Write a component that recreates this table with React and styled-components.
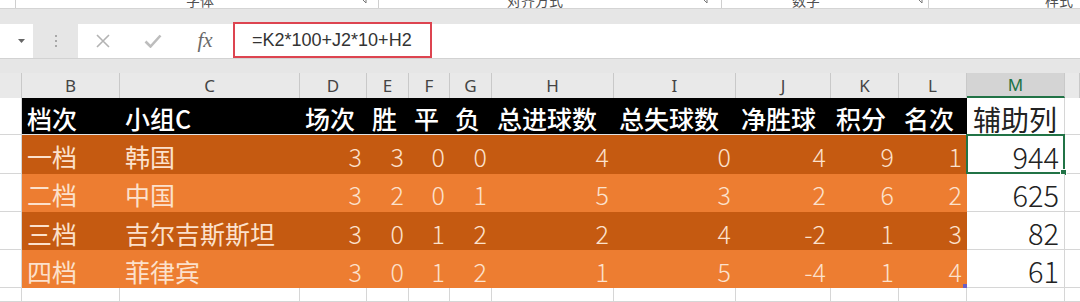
import React from 'react';
import styled, { createGlobalStyle } from 'styled-components';

const COLS = '22px 98px 180px 67px 42px 41px 42px 122px 122px 95px 68px 68px 98px 1fr';

const GlobalStyle = createGlobalStyle`
  html, body { margin: 0; padding: 0; background: #fff; }
  body {
    width: 1080px; height: 302px; overflow: hidden;
    font-family: "Noto Sans CJK SC", "Noto Sans", sans-serif;
  }
`;

const Page = styled.div`
  width: 1080px;
  height: 302px;
  display: flex;
  flex-direction: column;
  overflow: hidden;
  background: #fff;
`;

/* ---------- ribbon remnant ---------- */
const Ribbon = styled.div`
  height: 8px;
  display: flex;
  background: #fff;
  overflow: hidden;
  border-bottom: 1px solid #d4d4d4;
`;
const RibbonGroup = styled.div`
  width: ${p => p.$w}px;
  flex: ${p => (p.$grow ? 1 : 'none')};
  position: relative;
  display: flex;
  align-items: flex-start;
  padding-left: ${p => p.$label || 0}px;
  box-sizing: border-box;
  border-right: ${p => (p.$grow ? 'none' : '1px solid #cfcfcf')};
`;
const RibbonLabel = styled.span`
  font-size: 14px;
  line-height: 14px;
  margin-top: -7px;
  color: #505050;
  white-space: nowrap;
`;
const Launcher = styled.svg`
  position: absolute;
  right: ${p => p.$r}px;
  top: -4px;
`;

/* ---------- formula bar ---------- */
const Band = styled.div`
  height: ${p => p.$h}px;
  background: #e6e6e6;
  border-top: ${p => (p.$line ? '1px solid #d2d2d2' : 'none')};
`;
const FormulaRow = styled.div`
  height: 34px;
  display: flex;
  background: #e6e6e6;
`;
const NameBox = styled.div`
  width: 33px;
  background: #fff;
  display: flex;
  align-items: center;
  justify-content: flex-end;
  padding-right: 8px;
  box-sizing: border-box;
`;
const Gap = styled.div`
  width: 45px;
  display: flex;
  align-items: center;
  justify-content: center;
`;
const Dots = styled.div`
  display: flex;
  flex-direction: column;
  gap: 3px;
  & > span { width: 2px; height: 2px; background: #a8a8a8; display: block; }
`;
const FormulaBox = styled.div`
  flex: 1;
  background: #fff;
  display: flex;
  align-items: center;
`;
const IconSlot = styled.div`
  width: 50px;
  display: flex;
  align-items: center;
  justify-content: center;
`;
const Fx = styled.span`
  font-family: "Liberation Serif", "DejaVu Serif", serif;
  font-style: italic;
  font-size: 21px;
  color: #6a6a6a;
  margin-left: 4px;
`;
const RedBox = styled.div`
  margin-left: 5px;
  width: 199px;
  height: 36px;
  margin-top: -1px;
  box-sizing: border-box;
  border: 2px solid #dd4450;
  display: flex;
  align-items: center;
  padding-left: 17px;
  font-family: "Liberation Sans", Arial, sans-serif;
  font-size: 18px;
  color: #333;
`;

/* ---------- sheet ---------- */
const ColHeaderRow = styled.div`
  display: grid;
  grid-template-columns: ${COLS};
  height: 25px;
  background: #e9e9e9;
`;
const ColHead = styled.div`
  display: flex;
  align-items: center;
  justify-content: center;
  font-family: "Noto Sans", "Liberation Sans", sans-serif;
  font-size: 17px;
  line-height: 1;
  padding-top: 1px;
  box-sizing: border-box;
  color: ${p => (p.$active ? '#217346' : '#444')};
  background: ${p => (p.$active ? '#d4d4d4' : 'transparent')};
  border-right: 1px solid #c9c9c9;
  border-bottom: ${p => (p.$active ? '2px solid #217346' : 'none')};
`;

const Row = styled.div`
  display: grid;
  grid-template-columns: ${COLS};
  height: ${p => p.$h}px;
`;

const BG = { head: '#000000', dark: '#c55a11', light: '#ed7d31', none: '#ffffff' };

const RowHead = styled.div`
  background: #fff;
  border-right: 1px solid #d6d6d6;
  border-bottom: 1px solid #d6d6d6;
`;

const Cell = styled.div`
  position: relative;
  display: flex;
  align-items: center;
  justify-content: ${p => (p.$right ? 'flex-end' : 'flex-start')};
  padding: ${p => (p.$tone === 'head' ? 6 : 4)}px 5px 0 ${p => (p.$right ? 0 : 5)}px;
  box-sizing: border-box;
  background: ${p => BG[p.$tone]};
  color: ${p => (p.$tone === 'head' ? '#ffffff' : '#fce1cc')};
  font-size: 25px;
  font-weight: ${p => (p.$tone === 'head' ? 500 : p.$right ? 300 : 400)};
  line-height: 1;
  white-space: nowrap;
  border-bottom: ${p => (p.$tone === 'head' ? '1px solid #e2e2e2' : 'none')};
`;

const AuxCell = styled.div`
  position: relative;
  display: flex;
  align-items: center;
  justify-content: ${p => (p.$head ? 'flex-start' : 'flex-end')};
  padding: ${p => (p.$head ? 6 : 4)}px 5px 0 6px;
  box-sizing: border-box;
  background: #fff;
  color: #222;
  font-size: ${p => (p.$head ? 28 : 29)}px;
  font-weight: ${p => (p.$head ? 400 : 300)};
  line-height: 1;
  border-right: 1px solid #d6d6d6;
  border-bottom: 1px solid #d6d6d6;
`;

const Blank = styled.div`
  background: #fff;
  border-right: ${p => (p.$noRight ? 'none' : '1px solid #d6d6d6')};
  border-bottom: 1px solid #d6d6d6;
`;

const Selection = styled.div`
  position: absolute;
  left: -1px;
  top: -1px;
  right: -1px;
  bottom: -1px;
  border: 2px solid #217346;
  pointer-events: none;
`;
const Handle = styled.div`
  position: absolute;
  right: -4px;
  bottom: -4px;
  width: 5px;
  height: 5px;
  background: #217346;
  border: 1px solid #fff;
`;
const ResizeMark = styled.div`
  position: absolute;
  right: 0;
  bottom: 0;
  width: 4px;
  height: 4px;
  background: #6b5fc4;
`;

const header = ['档次', '小组C', '场次', '胜', '平', '负', '总进球数', '总失球数', '净胜球', '积分', '名次'];
const rows = [
  { tone: 'dark', h: 39, cells: ['一档', '韩国', 3, 3, 0, 0, 4, 0, 4, 9, 1], aux: 944, sel: true },
  { tone: 'light', h: 38, cells: ['二档', '中国', 3, 2, 0, 1, 5, 3, 2, 6, 2], aux: 625 },
  { tone: 'dark', h: 39, cells: ['三档', '吉尔吉斯斯坦', 3, 0, 1, 2, 2, 4, -2, 1, 3], aux: 82 },
  { tone: 'light', h: 38, cells: ['四档', '菲律宾', 3, 0, 1, 2, 1, 5, -4, 1, 4], aux: 61, last: true },
];
const letters = ['B', 'C', 'D', 'E', 'F', 'G', 'H', 'I', 'J', 'K', 'L', 'M', ''];

const LauncherIcon = ({ r }) => (
  <Launcher $r={r} width="9" height="9" viewBox="0 0 9 9">
    <path d="M1 1h6v6" fill="none" stroke="#777" strokeWidth="1" />
    <path d="M1 1l6 6" fill="none" stroke="#777" strokeWidth="1" />
  </Launcher>
);

export default function App() {
  return (
    <Page>
      <GlobalStyle />
      <Ribbon>
        <RibbonGroup $w={16} />
        <RibbonGroup $w={363} $label={170}>
          <RibbonLabel>字体</RibbonLabel>
          <LauncherIcon r={10} />
        </RibbonGroup>
        <RibbonGroup $w={343} $label={128}>
          <RibbonLabel>对齐方式</RibbonLabel>
          <LauncherIcon r={12} />
        </RibbonGroup>
        <RibbonGroup $w={207} $label={70}>
          <RibbonLabel>数字</RibbonLabel>
          <LauncherIcon r={4} />
        </RibbonGroup>
        <RibbonGroup $grow $label={116}>
          <RibbonLabel>样式</RibbonLabel>
        </RibbonGroup>
      </Ribbon>
      <Band $h={15} />
      <FormulaRow>
        <NameBox>
          <svg width="7" height="4" viewBox="0 0 7 4"><path d="M0 0h7L3.5 4z" fill="#666" /></svg>
        </NameBox>
        <Gap>
          <Dots><span /><span /><span /></Dots>
        </Gap>
        <FormulaBox>
          <IconSlot>
            <svg width="16" height="16" viewBox="0 0 16 16">
              <path d="M2 2l12 12M14 2L2 14" stroke="#b3b3b3" strokeWidth="1.6" fill="none" />
            </svg>
          </IconSlot>
          <IconSlot>
            <svg width="18" height="14" viewBox="0 0 18 14">
              <path d="M1.5 7.5l5 5L16.5 1.5" stroke="#bdbdbd" strokeWidth="2.6" fill="none" />
            </svg>
          </IconSlot>
          <IconSlot>
            <Fx>fx</Fx>
          </IconSlot>
          <RedBox>=K2*100+J2*10+H2</RedBox>
        </FormulaBox>
      </FormulaRow>
      <Band $h={14} $line />
      <ColHeaderRow>
        <ColHead />
        {letters.map((l, i) => (
          <ColHead key={i} $active={l === 'M'}>{l}</ColHead>
        ))}
      </ColHeaderRow>

      <Row $h={38}>
        <RowHead />
        {header.map((t, i) => (
          <Cell key={i} $tone="head">{t}</Cell>
        ))}
        <AuxCell $head>辅助列</AuxCell>
        <Blank $noRight />
      </Row>

      {rows.map((r, ri) => (
        <Row key={ri} $h={r.h}>
          <RowHead />
          {r.cells.map((c, i) => (
            <Cell key={i} $tone={r.tone} $right={i > 1}>
              {c}
              {r.last && i === r.cells.length - 1 && <ResizeMark />}
            </Cell>
          ))}
          <AuxCell>
            {r.aux}
            {r.sel && (
              <Selection>
                <Handle />
              </Selection>
            )}
          </AuxCell>
          <Blank $noRight />
        </Row>
      ))}

      <Row $h={14}>
        <RowHead />
        {letters.map((l, i) => (
          <Blank key={i} $noRight={i === letters.length - 1} />
        ))}
      </Row>
    </Page>
  );
}
